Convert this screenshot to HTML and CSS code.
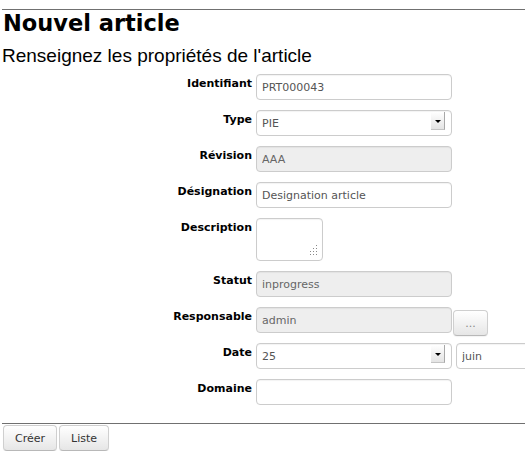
FILE: index.html
```html
<!DOCTYPE html>
<html lang="fr">
<head>
<meta charset="utf-8">
<title>Nouvel article</title>
<link rel="stylesheet" href="styles.css">
</head>
<body>
<div class="page">
  <div class="rule"></div>
  <h1 class="title">Nouvel article</h1>
  <h3 class="subtitle">Renseignez les propriétés de l'article</h3>
  <form class="form">
    <label class="lbl">Identifiant</label>
    <div class="field"><input class="inp" type="text" value="PRT000043"></div>

    <label class="lbl">Type</label>
    <div class="field">
      <span class="sel-wrap"><select class="sel"><option>PIE</option></select><span class="sel-arrow"></span></span>
    </div>

    <label class="lbl">Révision</label>
    <div class="field"><input class="inp" type="text" value="AAA" disabled></div>

    <label class="lbl">Désignation</label>
    <div class="field"><input class="inp" type="text" value="Designation article"></div>

    <label class="lbl">Description</label>
    <div class="field">
      <span class="ta-wrap"><textarea class="ta"></textarea><svg class="grip" width="10" height="10" viewBox="0 0 10 10"><g fill="#8a8a8a"><rect x="8" y="0" width="1" height="1"/><rect x="8" y="3" width="1" height="1"/><rect x="5" y="3" width="1" height="1"/><rect x="8" y="6" width="1" height="1"/><rect x="5" y="6" width="1" height="1"/><rect x="2" y="6" width="1" height="1"/><rect x="8" y="9" width="1" height="1"/><rect x="5" y="9" width="1" height="1"/><rect x="2" y="9" width="1" height="1"/></g></svg></span>
    </div>

    <label class="lbl">Statut</label>
    <div class="field"><input class="inp" type="text" value="inprogress" disabled></div>

    <label class="lbl">Responsable</label>
    <div class="field field-row"><input class="inp" type="text" value="admin" disabled><button type="button" class="btn btn-more">...</button></div>

    <label class="lbl">Date</label>
    <div class="field field-row gap">
      <span class="sel-wrap"><select class="sel"><option>25</option></select><span class="sel-arrow"></span></span>
      <span class="sel-wrap"><select class="sel"><option>juin</option></select><span class="sel-arrow"></span></span>
    </div>

    <label class="lbl">Domaine</label>
    <div class="field"><input class="inp" type="text" value=""></div>
  </form>
  <div class="rule rule-bottom"></div>
  <div class="actions">
    <button type="button" class="btn">Créer</button>
    <button type="button" class="btn">Liste</button>
  </div>
</div>
</body>
</html>
```
FILE: styles.css
```css
html, body {
  margin: 0;
  padding: 0;
  background: #fff;
  overflow: hidden;
}
body {
  font-family: "DejaVu Sans", Verdana, sans-serif;
  font-size: 11px;
  color: #000;
}
.page {
  padding: 9px 0 0 2px;
}
.rule {
  height: 1px;
  background: #707070;
}
.title {
  margin: 0;
  padding-left: 1px;
  font: bold 22.5px/26px "DejaVu Sans", Verdana, sans-serif;
  color: #000;
}
.subtitle {
  margin: 9px 0 0;
  font: normal 19px/22px "Liberation Sans", Arial, sans-serif;
  color: #000;
}
.form {
  display: grid;
  grid-template-columns: 250px auto;
  column-gap: 4px;
  row-gap: 10px;
  margin-top: 7px;
  align-items: start;
}
.lbl {
  text-align: right;
  font-weight: bold;
  line-height: 14px;
  padding-top: 3px;
  color: #000;
}
.field {
  display: block;
  overflow: visible;
}
.field-row {
  display: flex;
  align-items: flex-start;
}
.field-row.gap {
  gap: 4px;
}
.inp, .sel, .ta {
  box-sizing: border-box;
  width: 196px;
  height: 26px;
  margin: 0;
  padding: 0 5px;
  border: 1px solid #ccc;
  border-radius: 4px;
  background: #fff;
  color: #555;
  font: 11px "DejaVu Sans", Verdana, sans-serif;
  box-shadow: inset 0 1px 1px rgba(0,0,0,0.05);
  outline: none;
}
.inp:disabled {
  background: #eee;
  color: #666;
}
.sel-wrap, .ta-wrap {
  position: relative;
  display: inline-block;
  vertical-align: top;
  flex: none;
}
.sel {
  appearance: none;
  -webkit-appearance: none;
  display: block;
}
.sel-arrow {
  position: absolute;
  right: 7px;
  top: 2px;
  width: 14px;
  height: 18px;
  box-sizing: border-box;
  background: linear-gradient(#ffffff, #e4e4e4);
  border-right: 1px solid #a8a8a8;
  border-bottom: 1px solid #c4c4c4;
  pointer-events: none;
}
.sel-arrow::after {
  content: "";
  position: absolute;
  left: 4px;
  top: 8px;
  width: 0;
  height: 0;
  border-left: 3px solid transparent;
  border-right: 3px solid transparent;
  border-top: 3px solid #000;
}
.ta {
  display: block;
  width: 67px;
  height: 43px;
  resize: none;
}
.grip {
  position: absolute;
  right: 5px;
  bottom: 6px;
}
.btn {
  box-sizing: border-box;
  height: 26px;
  margin: 0;
  padding: 0 11px;
  border: 1px solid #cfcfcf;
  border-bottom-color: #b8b8b8;
  border-radius: 4px;
  background: linear-gradient(#ffffff, #e6e6e6);
  color: #333;
  font: 11px "DejaVu Sans", Verdana, sans-serif;
  box-shadow: 0 1px 1px rgba(0,0,0,0.05);
  cursor: pointer;
}
.btn-more {
  width: 35px;
  padding: 0;
  margin: 3px 0 -3px 1px;
  color: #888;
}
.rule-bottom {
  margin-top: 18px;
}
.actions {
  display: flex;
  gap: 2px;
  margin-top: 1px;
  padding-left: 1px;
}
```
